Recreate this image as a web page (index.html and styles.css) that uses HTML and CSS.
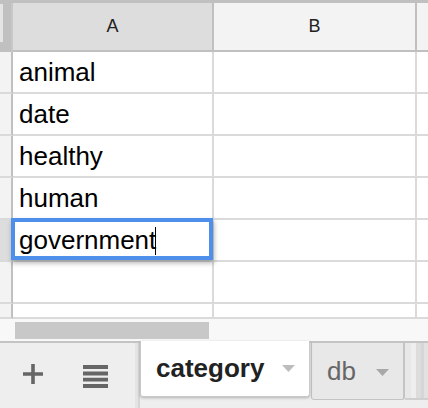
FILE: index.html
```html
<!DOCTYPE html>
<html>
<head>
<meta charset="utf-8">
<link rel="stylesheet" href="styles.css">
</head>
<body>
<div class="topbar"></div>
<div class="grid">
  <div class="corner"></div>
  <div class="colhead sel">A</div>
  <div class="colhead">B</div>
  <div class="colhead last"></div>

  <div class="rowhead"></div><div class="cell">animal</div><div class="cell"></div><div class="cell last"></div>
  <div class="rowhead"></div><div class="cell">date</div><div class="cell"></div><div class="cell last"></div>
  <div class="rowhead"></div><div class="cell">healthy</div><div class="cell"></div><div class="cell last"></div>
  <div class="rowhead"></div><div class="cell">human</div><div class="cell"></div><div class="cell last"></div>
  <div class="rowhead sel"></div><div class="cell editing"><div class="editor">government<span class="caret-line"></span></div></div><div class="cell"></div><div class="cell last"></div>
  <div class="rowhead"></div><div class="cell"></div><div class="cell"></div><div class="cell last"></div>
  <div class="rowhead short"></div><div class="cell short"></div><div class="cell short"></div><div class="cell short last"></div>
</div>
<div class="hscroll"><div class="thumb"></div></div>
<div class="tabbar">
  <div class="tools">
    <svg class="plus" width="20" height="20" viewBox="0 0 20 20"><path d="M10 0V20M0 10H20" stroke="#666" stroke-width="3.6" fill="none"/></svg>
    <svg class="menu" width="25" height="23" viewBox="0 0 25 23"><path d="M0 2H25M0 8.5H25M0 14.7H25M0 21H25" stroke="#666" stroke-width="3.8" fill="none"/></svg>
  </div>
  <div class="sep"></div>
  <div class="tab active"><span class="name">category</span><svg class="drop" width="13" height="7" viewBox="0 0 13 7"><path d="M0 0H13L6.5 7Z" fill="#bdbdbd"/></svg></div>
  <div class="tab other"><span class="name">db</span><svg class="drop" width="13" height="7" viewBox="0 0 13 7"><path d="M0 0H13L6.5 7Z" fill="#a8a8a8"/></svg></div>
  <div class="more"></div>
</div>
</body>
</html>
```
FILE: styles.css
```css
html, body {
  margin: 0;
  padding: 0;
}
body {
  width: 428px;
  height: 408px;
  overflow: hidden;
  background: #fff;
  font-family: "Liberation Sans", Arial, sans-serif;
}
.topbar {
  height: 3px;
  background: #c0c0c0;
}
.grid {
  display: grid;
  grid-template-columns: 13px 201px 203px 1fr;
  grid-template-rows: 49px repeat(6, 42px) 15px;
}
.grid > div {
  box-sizing: border-box;
}
.corner {
  background: #c0c0c0;
  position: relative;
  border-right: 2px solid #c8c8c8;
}
.corner::before {
  content: "";
  position: absolute;
  left: 0;
  top: 1px;
  width: 3px;
  height: 38px;
  background: #e4e4e4;
}
.colhead {
  background: #f3f3f3;
  border-right: 2px solid #c0c0c0;
  border-bottom: 2px solid #c0c0c0;
  font-size: 18px;
  color: #222;
  display: flex;
  align-items: center;
  justify-content: center;
}
.colhead.sel {
  background: #dddddd;
}
.colhead.last {
  border-right: none;
}
.rowhead {
  background: #f3f3f3;
  border-right: 2px solid #c0c0c0;
  border-bottom: 2px solid #dadada;
}
.rowhead.sel {
  background: #dddddd;
}
.cell {
  background: #fff;
  border-right: 2px solid #dadada;
  border-bottom: 2px solid #dadada;
  font-size: 26px;
  line-height: 40px;
  color: #000;
  padding-left: 6px;
  white-space: nowrap;
  overflow: hidden;
}
.cell.last {
  border-right: none;
}
.cell.editing {
  position: relative;
  overflow: visible;
}
.editor {
  position: absolute;
  left: -2px;
  top: -2px;
  right: -1px;
  bottom: 0;
  border: 4px solid #4f8fec;
  background: #fff;
  box-shadow: 1px 3px 5px rgba(0, 0, 0, 0.3);
  padding-left: 4px;
  line-height: 36px;
  font-size: 26px;
  z-index: 2;
}
.caret-line {
  display: inline-block;
  width: 1px;
  height: 28px;
  background: #000;
  margin-left: -1px;
  vertical-align: -6px;
}
.hscroll {
  height: 22px;
  background: #f8f8f8;
  padding-top: 3px;
  box-sizing: border-box;
}
.thumb {
  margin-left: 15px;
  width: 194px;
  height: 17px;
  background: #c8c8c8;
}
.tabbar {
  height: 67px;
  box-sizing: border-box;
  border-top: 2px solid #c4c4c4;
  background: #eeeeee;
  display: flex;
  align-items: flex-start;
}
.tools {
  width: 135px;
  height: 65px;
  display: flex;
  align-items: flex-start;
  padding-left: 23px;
  box-sizing: border-box;
}
.plus {
  margin-top: 21px;
  display: block;
}
.menu {
  margin-top: 22px;
  margin-left: 40px;
  display: block;
}
.sep {
  width: 5px;
  height: 65px;
  background: linear-gradient(to right, #e4e4e4 0, #e4e4e4 3px, #d6d6d6 3px);
}
.tab {
  display: flex;
  align-items: center;
  box-sizing: border-box;
  font-size: 26px;
}
.tab.active {
  width: 170px;
  height: 56px;
  margin-top: -2px;
  background: #fff;
  border: 1px solid #c8c8c8;
  border-top: none;
  border-radius: 0 0 3px 3px;
  box-shadow: 0 1px 3px rgba(0, 0, 0, 0.25);
  padding-left: 15px;
  font-weight: bold;
  color: #222;
  position: relative;
  z-index: 1;
}
.tab.active .drop {
  margin-left: 18px;
}
.tab.other {
  width: 94px;
  height: 57px;
  margin-left: 1px;
  background: #e8e8e8;
  border: 1px solid #c4c4c4;
  border-top: none;
  border-right: 2px solid #c4c4c4;
  border-radius: 0 0 3px 3px;
  padding-left: 15px;
  color: #666;
}
.tab.other .drop {
  margin-left: 20px;
  margin-top: 2px;
}
.drop {
  display: block;
}
.more {
  flex: 1;
  height: 57px;
  box-sizing: border-box;
  border-bottom: 2px solid #cfcfcf;
  background: linear-gradient(to right, #e8e8e8 0, #e8e8e8 6px, #eeeeee 6px, #eeeeee 11px, #dcdcdc 11px, #dcdcdc 16px, #d6d6d6 16px, #d6d6d6 19px, #e2e2e2 19px);
}
```
